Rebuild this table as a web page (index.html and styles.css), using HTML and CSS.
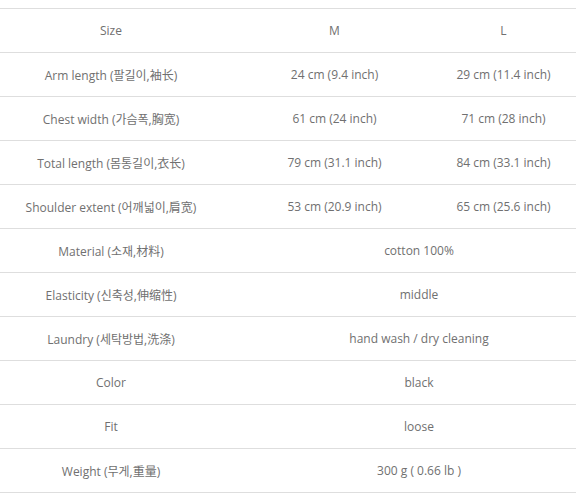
FILE: index.html
```html
<!DOCTYPE html>
<html>
<head>
<meta charset="utf-8">
<link rel="stylesheet" href="styles.css">
</head>
<body>
<table class="spec">
  <colgroup><col class="c1"><col class="c2"><col class="c3"></colgroup>
  <tbody>
    <tr><td>Size</td><td>M</td><td>L</td></tr>
    <tr><td>Arm length (팔길이,袖长)</td><td>24 cm (9.4 inch)</td><td>29 cm (11.4 inch)</td></tr>
    <tr><td>Chest width (가슴폭,胸宽)</td><td>61 cm (24 inch)</td><td>71 cm (28 inch)</td></tr>
    <tr><td>Total length (몸통길이,衣长)</td><td>79 cm (31.1 inch)</td><td>84 cm (33.1 inch)</td></tr>
    <tr><td>Shoulder extent (어깨넓이,肩宽)</td><td>53 cm (20.9 inch)</td><td>65 cm (25.6 inch)</td></tr>
    <tr><td>Material (소재,材料)</td><td colspan="2">cotton 100%</td></tr>
    <tr><td>Elasticity (신축성,伸缩性)</td><td colspan="2">middle</td></tr>
    <tr><td>Laundry (세탁방법,洗涤)</td><td colspan="2">hand wash / dry cleaning</td></tr>
    <tr><td>Color</td><td colspan="2">black</td></tr>
    <tr><td>Fit</td><td colspan="2">loose</td></tr>
    <tr><td>Weight (무게,重量)</td><td colspan="2">300 g ( 0.66 lb )</td></tr>
  </tbody>
</table>
</body>
</html>
```
FILE: styles.css
```css
html, body {
  margin: 0;
  padding: 0;
  background: #fff;
  overflow: hidden;
}
body {
  padding-top: 8px;
  font-family: "Open Sans", "Noto Sans CJK KR", sans-serif;
  font-size: 12px;
  color: #707070;
}
.spec {
  margin-left: -28px;
  width: 616px;
  border-collapse: collapse;
  table-layout: fixed;
}
.c1 { width: 278px; }
.c2 { width: 169px; }
.c3 { width: 169px; }
.spec td {
  height: 43px;
  padding: 0;
  text-align: center;
  vertical-align: middle;
  border-top: 1px solid #dedede;
  border-bottom: 1px solid #dedede;
  white-space: nowrap;
}
```
